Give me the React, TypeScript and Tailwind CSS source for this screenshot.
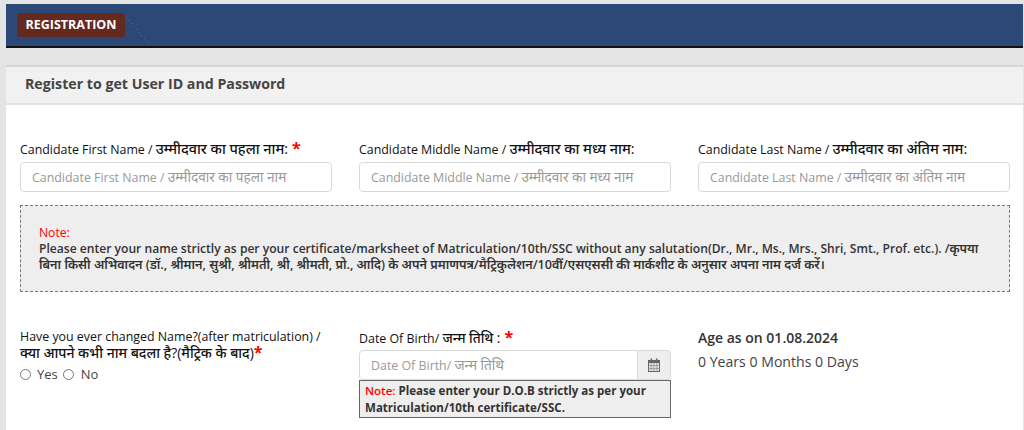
const Star = () => <span className="text-[#f00] text-[16px] font-bold leading-none">*</span>;

// latin and hindi parts differ in size in the reference
const En = ({ children }: { children: React.ReactNode }) => <span className="text-[12.4px]">{children}</span>;
const Hi = ({ children }: { children: React.ReactNode }) => <span className="text-[13.6px]">{children}</span>;

const CalendarIcon = () => (
    <svg width="12" height="14" viewBox="0 0 12 14" fill="none">
        <rect x="0.5" y="2.5" width="11" height="11" fill="#e4e4e4" stroke="#666" />
        <rect x="0.5" y="2.5" width="11" height="2.5" fill="#666" />
        <rect x="2.5" y="0.5" width="1.6" height="3" fill="#666" />
        <rect x="7.9" y="0.5" width="1.6" height="3" fill="#666" />
        <path d="M0.5 7.5H11.5M0.5 10.5H11.5M3.2 5V13.5M6 5V13.5M8.8 5V13.5" stroke="#8a8a8a" strokeWidth="0.7" />
    </svg>
);

const TextField = ({ en, hi, required }: { en: string; hi: string; required?: boolean }) => (
    <div className="w-[312px] shrink-0">
        <div className="h-[27px] pb-[2px] flex items-center gap-1 font-medium text-[#111] whitespace-nowrap">
            <div>
                <En>{en} / </En>
                <span className="text-[14.4px]">{hi}:</span>
            </div>
            {required && <Star />}
        </div>
        <div className="w-full h-[30px] px-[11px] pb-[2px] flex items-center gap-1 text-[#999] bg-white border border-[#d9d9d9] rounded-[4px] whitespace-nowrap">
            <div>
                <En>{en} / </En>
                <Hi>{hi}</Hi>
            </div>
        </div>
    </div>
);

export default function App() {
    return (
        <div className="w-[1024px] h-[430px] overflow-hidden bg-[#e4e4e4] pt-1 pl-1.5 pr-px font-['Open_Sans','Noto_Sans',sans-serif] text-[#333]">
            <div className="relative h-[44px] bg-[#2b4877] border-b-2 border-[#111] pt-[9px] pl-[11px]">
                <span className="block w-[108px] h-[24px] text-center rounded-[3px] bg-[#642a20] text-white text-[12.5px] font-bold leading-[24px]">
                    REGISTRATION
                </span>
                <svg className="absolute left-[120px] top-[13px]" width="24" height="28">
                    <path d="M0 0 L24 28" stroke="#5f78a0" strokeWidth="1" strokeDasharray="1 3" fill="none" />
                </svg>
            </div>
            <div className="mt-[17px] bg-white border-t-2 border-[#d6d6d6] h-[400px]">
                <div className="h-[38px] bg-[#f1f1f1] border-b-2 border-[#e2e2e2] pl-[19px] text-[14.2px] font-bold text-[#444] leading-[34px]">
                    Register to get User ID and Password
                </div>
                <div className="pl-[14px] pt-[30px]">
                    <div className="flex gap-[27px]">
                        <TextField required en="Candidate First Name" hi="उम्मीदवार का पहला नाम" />
                        <TextField en="Candidate Middle Name" hi="उम्मीदवार का मध्य नाम" />
                        <TextField en="Candidate Last Name" hi="उम्मीदवार का अंतिम नाम" />
                    </div>
                    <div className="mt-[13px] w-[990px] h-[87px] bg-[#eeeeee] border border-dashed border-[#777] pt-[19px] pl-[18px] pr-[8px] text-[12.1px] leading-[16px] font-semibold text-[#333]">
                        <div className="text-[#f00] font-normal">Note:</div>
                        <div>
                            Please enter your name strictly as per your certificate/marksheet of Matriculation/10th/SSC without any salutation(Dr., Mr., Ms., Mrs., Shri, Smt., Prof. etc.). /<span className="text-[12.6px]">कृपया</span>
                            <br />
                            <span className="text-[12.6px]">बिना किसी अभिवादन (डॉ., श्रीमान, सुश्री, श्रीमती, श्री, श्रीमती, प्रो., आदि) के अपने प्रमाणपत्र/मैट्रिकुलेशन/10वीं/एसएससी की मार्कशीट के अनुसार अपना नाम दर्ज करें।</span>
                        </div>
                    </div>
                    <div className="flex gap-[27px] mt-[32px]">
                        <div className="w-[312px] shrink-0 font-medium text-[#111] leading-[15px] pt-[4px]">
                            <div>
                                <En>Have you ever changed Name?(after matriculation) /</En>
                                <br />
                                <span className="text-[14px]">क्या आपने कभी नाम बदला है?(मैट्रिक के बाद)</span>
                                <Star />
                            </div>
                            <div className="flex items-center mt-[7px] font-normal text-[13px] text-[#444]">
                                <span className="w-[11px] h-[11px] rounded-full border border-[#777] bg-white mr-[6px]" />
                                Yes
                                <span className="w-[11px] h-[11px] rounded-full border border-[#777] bg-white ml-[5px] mr-[7px]" />
                                No
                            </div>
                        </div>
                        <div className="w-[312px] shrink-0">
                            <div className="h-[26px] flex items-center gap-1 font-medium text-[#111] whitespace-nowrap">
                                <div>
                                    <En>Date Of Birth/ </En>
                                    <Hi>जन्म तिथि :</Hi>
                                </div>
                                <Star />
                            </div>
                            <div className="flex h-[30px]">
                                <div className="flex-1 min-w-0 px-[11px] pb-[2px] flex items-center text-[#999] bg-white border border-[#d9d9d9] rounded-l-[4px] whitespace-nowrap">
                                    <div>
                                        <En>Date Of Birth/ </En>
                                        <Hi>जन्म तिथि</Hi>
                                    </div>
                                </div>
                                <div className="w-[33px] flex items-center justify-center bg-[#eeeeee] border border-l-0 border-[#d9d9d9] rounded-r-[4px]">
                                    <CalendarIcon />
                                </div>
                            </div>
                            <div className="h-[38px] bg-[#eeeeee] border border-[#666] px-[5px] pt-[1px] text-[11.55px] leading-[17px] font-bold text-[#333]">
                                <span className="text-[#f00] font-semibold">Note:</span> Please enter your D.O.B strictly as per your Matriculation/10th certificate/SSC.
                            </div>
                        </div>
                        <div className="w-[312px] shrink-0 pt-[4px]">
                            <div className="text-[14px] font-semibold leading-[20px]">Age as on 01.08.2024</div>
                            <div className="mt-[4px] text-[14.1px] text-[#444] leading-[20px]">0 Years 0 Months 0 Days</div>
                        </div>
                    </div>
                </div>
            </div>
        </div>
    );
}
